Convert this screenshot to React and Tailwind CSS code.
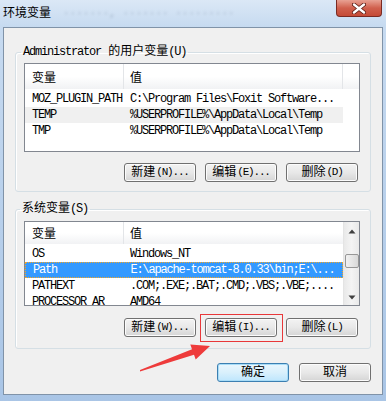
import React from "react";

const mono = "tracking-[-1.2px]";

const Btn = ({ cjk, key2, dots = true, primary = false }) => (
  <div
    className={
      "flex h-[19px] w-[72px] items-center justify-center rounded-[3px] border text-[12px] leading-none " +
      (primary
        ? "border-[#3c7fb1] bg-linear-to-b from-[#eaf6fd] via-[#d9f0fc] to-[#bee6fd] shadow-[inset_0_0_0_1px_#a8dcf7]"
        : "border-[#707070] bg-linear-to-b from-[#f3f3f3] via-[#e8e8e8] to-[#d5d5d5] shadow-[inset_0_0_0_1px_#fcfcfc]")
    }
  >
    <span>{cjk}</span>
    {key2 && <span className={mono + " ml-[1px] text-[11px]"}>{key2}</span>}
    {key2 && dots && <span className={mono + " text-[11px]"}>...</span>}
  </div>
);

const HeaderRow = ({ h }) => (
  <div
    className={
      "flex shrink-0 bg-linear-to-b from-white via-white to-[#f1f2f4] " + h
    }
  >
    <div className="flex w-[99px] items-center border-r border-[#e3e5e8] pl-[7px] pt-[5px] text-[12px]">
      变量
    </div>
    <div className="flex w-[219px] items-center border-r border-[#e3e5e8] pl-[6px] pt-[5px] text-[12px]">
      值
    </div>
    <div className="flex-1" />
  </div>
);

const Row = ({ name, value, cls = "" }) => (
  <div className={"flex h-[16px] w-[318px] shrink-0 items-center text-[12px] " + cls}>
    <div className={mono + " w-[99px] pl-[7px] whitespace-nowrap"}>{name}</div>
    <div className={mono + " w-[219px] pl-[6px] whitespace-nowrap"}>{value}</div>
  </div>
);

export default function App() {
  return (
    <div
      className="relative h-[401px] w-[386px] overflow-hidden bg-linear-to-b from-[#c9dcf1] to-[#a9c5e6] text-black"
      style={{ fontFamily: '"Liberation Mono", "Noto Sans CJK SC", monospace' }}
    >
      {/* title bar */}
      <div className="flex h-[27px] items-start bg-linear-to-b from-[#dbe8f6] to-[#c6daf0]">
        <span
          className="ml-[3px] mt-[3px] text-[12px] leading-[18px]"
          style={{ fontFamily: '"Noto Sans CJK SC", sans-serif' }}
        >
          环境变量
        </span>
        <span className="ml-[12px] mt-[5px] text-[11px] text-[#6f8198] opacity-60 blur-[1.5px]">
          ·······, ······· ·········
        </span>
        <div className="ml-auto mr-[4px] flex h-[17px] w-[46px] items-center justify-center rounded-b-[4px] border border-t-0 border-[#7a2a22] bg-linear-to-b from-[#e8a193] via-[#d0604d] to-[#c44a36]">
          <svg width="14" height="11" viewBox="0 0 14 11">
            <path
              d="M2 1.5 L12 9.5 M12 1.5 L2 9.5"
              stroke="#5a1a12"
              strokeWidth="4"
              strokeLinecap="round"
            />
            <path
              d="M2 1.5 L12 9.5 M12 1.5 L2 9.5"
              stroke="#ffffff"
              strokeWidth="2.4"
              strokeLinecap="round"
            />
          </svg>
        </div>
      </div>

      {/* main panel */}
      <div className="ml-[3px] flex h-[368px] w-[380px] flex-col border border-[#8093a8] bg-[#f0f0f0]">
        {/* user variables */}
        <fieldset className="ml-[11px] mt-[16px] w-[356px] rounded-[3px] border border-[#d5dfe5] pb-[9px] shadow-[inset_1px_1px_0_#ffffff]">
          <legend className="ml-[5px] px-[2px] text-[12px] leading-[16px]">
            <span className={mono}>Administrator</span> 的用户变量<span className={mono}>(U)</span>
          </legend>
          <div className="ml-[8px] mt-[3px] flex h-[89px] w-[336px] flex-col border border-[#828790] bg-white">
            <HeaderRow h="h-[25px]" />
            <div className="mt-[2px]" />
            <Row name="MOZ_PLUGIN_PATH" value="C:\Program Files\Foxit Software..." />
            <Row name="TEMP" value="%USERPROFILE%\AppData\Local\Temp" cls="bg-[#f0f0f0]" />
            <Row name="TMP" value="%USERPROFILE%\AppData\Local\Temp" />
          </div>
          <div className="ml-[108px] mt-[11px] flex gap-[9px]">
            <Btn cjk="新建" key2="(N)" />
            <Btn cjk="编辑" key2="(E)" />
            <Btn cjk="删除" key2="(D)" dots={false} />
          </div>
        </fieldset>

        {/* system variables */}
        <fieldset className="ml-[11px] mt-[9px] w-[356px] rounded-[3px] border border-[#d5dfe5] pb-[11px] shadow-[inset_1px_1px_0_#ffffff]">
          <legend className="ml-[4px] px-[2px] text-[12px] leading-[16px]">
            系统变量<span className={mono}>(S)</span>
          </legend>
          <div className="ml-[8px] mt-[4px] flex h-[85px] w-[336px] border border-[#828790] bg-white">
            <div className="flex w-[318px] flex-col overflow-hidden">
              <div className="flex h-[22px] shrink-0 bg-linear-to-b from-white via-white to-[#f1f2f4]">
                <div className="flex w-[99px] items-center border-r border-[#e3e5e8] pl-[7px] pt-[4px] text-[12px]">
                  变量
                </div>
                <div className="flex w-[219px] items-center pl-[6px] pt-[4px] text-[12px]">
                  值
                </div>
              </div>
              <div className="mt-[2px]" />
              <Row name="OS" value="Windows_NT" />
              <Row
                name="Path"
                value="E:\apache-tomcat-8.0.33\bin;E:\..."
                cls="border border-dotted border-[#f5a623] bg-[#3399ff] text-white"
              />
              <Row name="PATHEXT" value=".COM;.EXE;.BAT;.CMD;.VBS;.VBE;...." />
              <Row name="PROCESSOR_AR" value="AMD64" />
            </div>
            {/* scrollbar */}
            <div className="flex w-[16px] flex-col items-center border-l border-[#e4e4e4] bg-linear-to-r from-[#e9e9e9] via-[#f4f4f4] to-[#e9e9e9]">
              <svg className="mt-[7px]" width="8" height="5" viewBox="0 0 8 5">
                <path d="M4 0.5 L7.5 4.5 L0.5 4.5 Z" fill="#404040" />
              </svg>
              <div className="mt-[20px] h-[14px] w-[14px] rounded-[2px] border border-[#979797] bg-linear-to-r from-[#f1f1f1] via-[#e6e6e6] to-[#d8d8d8]" />
              <svg className="mb-[5px] mt-auto" width="8" height="5" viewBox="0 0 8 5">
                <path d="M0.5 0.5 L7.5 0.5 L4 4.5 Z" fill="#404040" />
              </svg>
            </div>
          </div>
          <div className="ml-[108px] mt-[12px] flex gap-[9px]">
            <Btn cjk="新建" key2="(W)" />
            <Btn cjk="编辑" key2="(I)" />
            <Btn cjk="删除" key2="(L)" dots={false} />
          </div>
        </fieldset>

        <div className="ml-[213px] mt-[14px] flex gap-[10px]">
          <Btn cjk="确定" primary />
          <Btn cjk="取消" />
        </div>
      </div>

      {/* annotation overlay: red highlight box and arrow */}
      <div className="absolute left-[200px] top-[314px] h-[28px] w-[83px] border border-[#e8383a]" />
      <svg className="absolute left-0 top-0" width="386" height="401" viewBox="0 0 386 401">
        <polygon
          points="140,370 192,349.2 190.3,344.5 210,346 195.7,359.5 194,354.8 140,371.5"
          fill="#ee3b3b"
        />
      </svg>
    </div>
  );
}
